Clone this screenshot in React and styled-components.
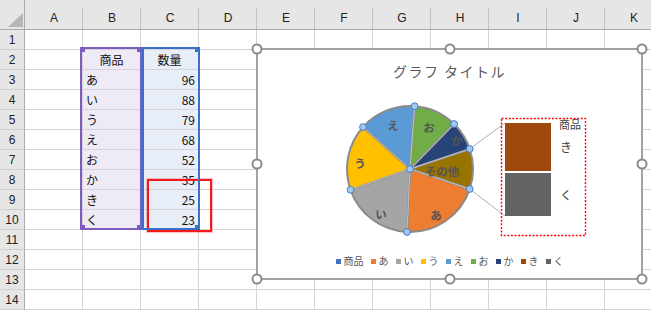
import React from 'react';
import styled, { createGlobalStyle } from 'styled-components';

const COLS = ['A', 'B', 'C', 'D', 'E', 'F', 'G', 'H', 'I', 'J', 'K'];
const ROW_COUNT = 14;

const items = [
  { name: 'あ', qty: 96 },
  { name: 'い', qty: 88 },
  { name: 'う', qty: 79 },
  { name: 'え', qty: 68 },
  { name: 'お', qty: 52 },
  { name: 'か', qty: 35 },
  { name: 'き', qty: 25 },
  { name: 'く', qty: 23 },
];

// pie slices in drawing order, "その他" sits centred on 3 o'clock
const slices = [
  { label: 'その他', value: 48, color: '#997300', at: [442, 171] },
  { label: 'あ', value: 96, color: '#ED7D31', at: [436, 215] },
  { label: 'い', value: 88, color: '#A5A5A5', at: [381, 214] },
  { label: 'う', value: 79, color: '#FFC000', at: [360, 163] },
  { label: 'え', value: 68, color: '#5B9BD5', at: [393, 125] },
  { label: 'お', value: 52, color: '#70AD47', at: [429, 127] },
  { label: 'か', value: 35, color: '#264478', at: [457, 140] },
];

const legend = [
  ['商品', '#4472C4'],
  ['あ', '#ED7D31'],
  ['い', '#A5A5A5'],
  ['う', '#FFC000'],
  ['え', '#5B9BD5'],
  ['お', '#70AD47'],
  ['か', '#264478'],
  ['き', '#9E480E'],
  ['く', '#636363'],
];

const GlobalStyle = createGlobalStyle`
  html, body {
    margin: 0;
    padding: 0;
    background: #ffffff;
    overflow: hidden;
  }
  body {
    font-family: "Noto Sans CJK JP", "Liberation Sans", sans-serif;
  }
`;

const Sheet = styled.div`
  position: relative;
  width: 651px;
  height: 311px;
  overflow: hidden;
  background: #ffffff;
`;

const Grid = styled.div`
  display: grid;
  grid-template-columns: 25px repeat(11, 58px);
  grid-template-rows: 30px repeat(${ROW_COUNT}, 20px);
`;

const Corner = styled.div`
  display: flex;
  justify-content: flex-end;
  align-items: flex-end;
  padding: 0 1px 2px 0;
  background: #e6e6e6;
  border-right: 1px solid #ababab;
  border-bottom: 1px solid #ababab;
  box-sizing: border-box;
`;

const CornerMark = styled.span`
  width: 15px;
  height: 14px;
  background: #b6b6b6;
  clip-path: polygon(100% 0, 100% 100%, 0 100%);
`;

const ColHeader = styled.div`
  position: relative;
  background: #e6e6e6;
  border-bottom: 1px solid #ababab;
  box-sizing: border-box;
  display: flex;
  justify-content: center;
  align-items: center;
  padding-top: 7px;
  font-family: "Liberation Sans", sans-serif;
  font-size: 12px;
  color: #222222;

  &::after {
    content: '';
    position: absolute;
    right: 0;
    top: 8px;
    bottom: 0;
    width: 1px;
    background: #c2c2c2;
  }
`;

const RowHeader = styled.div`
  background: #e6e6e6;
  border-right: 1px solid #ababab;
  border-bottom: 1px solid #cfcfcf;
  box-sizing: border-box;
  display: flex;
  justify-content: center;
  align-items: center;
  font-family: "Liberation Sans", sans-serif;
  font-size: 12px;
  color: #222222;
`;

const Cell = styled.div`
  background: ${(p) => p.$fill || '#ffffff'};
  border-right: 1px solid #d4d4d4;
  border-bottom: 1px solid #d4d4d4;
  box-sizing: border-box;
  display: flex;
  align-items: center;
  justify-content: ${(p) =>
    p.$align === 'right' ? 'flex-end' : p.$align === 'center' ? 'center' : 'flex-start'};
  padding: 0 3px 0 3px;
  font-size: 12px;
  color: #111111;
  white-space: nowrap;
`;

const RangeBox = styled.div`
  position: absolute;
  left: ${(p) => p.$left}px;
  top: 47px;
  width: ${(p) => p.$width}px;
  height: 183px;
  border: 2px solid ${(p) => p.$color};
  box-sizing: border-box;
  display: flex;
  flex-direction: column;
  justify-content: space-between;
  pointer-events: none;
`;

const HandleRow = styled.div`
  display: flex;
  justify-content: ${(p) => (p.$single ? 'flex-end' : 'space-between')};
  margin: -2px -2px;
`;

const RangeHandle = styled.span`
  width: 5px;
  height: 5px;
  background: ${(p) => p.$color};
`;

const MarkBox = styled.div`
  position: absolute;
  left: 147px;
  top: 179px;
  width: 65px;
  height: 53px;
  border: 2px solid #f21a1a;
  box-shadow: 0 0 0 1px rgba(255, 120, 120, 0.45);
  box-sizing: border-box;
`;

const Chart = styled.div`
  position: absolute;
  left: 256px;
  top: 48px;
  width: 387px;
  height: 232px;
  border: 2px solid #a3a3a3;
  box-sizing: border-box;
  background: #ffffff;
  display: flex;
  flex-direction: column;
`;

const ChartTitle = styled.div`
  height: 42px;
  line-height: 42px;
  text-align: center;
  font-size: 14px;
  letter-spacing: 1.5px;
  color: #595959;
`;

const Plot = styled.svg`
  display: block;
  width: 383px;
  height: 160px;
`;

const Legend = styled.div`
  display: flex;
  justify-content: center;
  align-items: center;
  gap: 7px;
  padding-top: 1px;
  height: 16px;
`;

const LegendItem = styled.div`
  display: flex;
  align-items: center;
  font-size: 10px;
  line-height: 16px;
  color: #595959;
`;

const LegendSwatch = styled.span`
  width: 5px;
  height: 5px;
  margin-right: 3px;
  background: ${(p) => p.$color};
`;

const ChartHandle = styled.span`
  position: absolute;
  width: 11px;
  height: 11px;
  border-radius: 50%;
  border: 2px solid #8a8a8a;
  background: #ffffff;
  box-sizing: border-box;
  transform: translate(-50%, -50%);
  left: calc(${(p) => p.$x}% + ${(p) => p.$x / 50 - 1}px);
  top: calc(${(p) => p.$y}% + ${(p) => p.$y / 50 - 1}px);
`;

const CX = 410;
const CY = 169;
const R = 63;

const polar = (deg, r = R) => {
  const a = (deg * Math.PI) / 180;
  return [CX + r * Math.sin(a), CY - r * Math.cos(a)];
};

const total = slices.reduce((s, x) => s + x.value, 0);

const arcs = (() => {
  let angle = 90 - ((slices[0].value / total) * 360) / 2;
  return slices.map((s) => {
    const sweep = (s.value / total) * 360;
    const start = angle;
    angle += sweep;
    return { ...s, start, end: angle, sweep };
  });
})();

const PieOfBar = () => {
  const top = polar(arcs[0].start);
  const bottom = polar(arcs[0].end);
  return (
    <Plot viewBox="258 92 383 160">
      <line x1={top[0]} y1={top[1]} x2={505} y2={123} stroke="#b0b0b0" strokeWidth="1" />
      <line x1={bottom[0]} y1={bottom[1]} x2={505} y2={216} stroke="#b0b0b0" strokeWidth="1" />

      {arcs.map((a) => {
        const [x1, y1] = polar(a.start);
        const [x2, y2] = polar(a.end);
        return (
          <path
            key={a.label}
            d={`M${CX},${CY} L${x1},${y1} A${R},${R} 0 ${a.sweep > 180 ? 1 : 0} 1 ${x2},${y2} Z`}
            fill={a.color}
            stroke="#8a8a8a"
            strokeWidth="2"
            strokeLinejoin="round"
          />
        );
      })}
      {arcs.map((a) => {
        const [x, y] = polar(a.start, R - 1);
        return <line key={a.label} x1={CX} y1={CY} x2={x} y2={y} stroke="#dcdcdc" strokeWidth="0.7" />;
      })}

      {arcs.map((a) => (
        <text
          key={a.label}
          x={a.at[0]}
          y={a.at[1]}
          textAnchor="middle"
          dominantBaseline="central"
          fontSize="11.5"
          fontWeight="700"
          fill="#555555"
        >
          {a.label}
        </text>
      ))}

      <rect x="505" y="123" width="46" height="48" fill="#9E480E" />
      <rect x="505" y="173" width="46" height="43" fill="#636363" />
      <text x="559" y="124" fontSize="11" fill="#404040" dominantBaseline="central">商品</text>
      <text x="560" y="146" fontSize="12" fill="#404040" dominantBaseline="central">き</text>
      <text x="560" y="194" fontSize="12" fill="#404040" dominantBaseline="central">く</text>
      <rect
        x="501.5"
        y="118.5"
        width="84"
        height="117"
        fill="none"
        stroke="#ff0000"
        strokeWidth="1.4"
        strokeDasharray="2 1.6"
      />

      {[[CX, CY], ...arcs.map((a) => polar(a.start))].map(([x, y], i) => (
        <circle key={i} cx={x} cy={y} r="3.4" fill="#a3c8ef" stroke="#3f7fc6" strokeWidth="1" />
      ))}
    </Plot>
  );
};

const cellValue = (col, row) => {
  if (row === 2 && col === 'B') return { text: '商品', align: 'center' };
  if (row === 2 && col === 'C') return { text: '数量', align: 'center' };
  const item = items[row - 3];
  if (item && col === 'B') return { text: item.name, align: 'left' };
  if (item && col === 'C') return { text: item.qty, align: 'right' };
  return null;
};

const cellFill = (col, row) => {
  if (row < 2 || row > 10) return null;
  if (col === 'B') return '#efebf6';
  if (col === 'C') return '#e8eef7';
  return null;
};

const Range = ({ left, width, color, single }) => (
  <RangeBox $left={left} $width={width} $color={color}>
    {[0, 1].map((i) => (
      <HandleRow key={i} $single={single}>
        {!single && <RangeHandle $color={color} />}
        <RangeHandle $color={color} />
      </HandleRow>
    ))}
  </RangeBox>
);

const App = () => {
  const rows = Array.from({ length: ROW_COUNT }, (_, i) => i + 1);
  return (
    <Sheet>
      <GlobalStyle />
      <Grid>
        <Corner>
          <CornerMark />
        </Corner>
        {COLS.map((c) => (
          <ColHeader key={c}>{c}</ColHeader>
        ))}
        {rows.map((r) => (
          <React.Fragment key={r}>
            <RowHeader>{r}</RowHeader>
            {COLS.map((c) => {
              const v = cellValue(c, r);
              return (
                <Cell key={c + r} $fill={cellFill(c, r)} $align={v && v.align}>
                  {v ? v.text : ''}
                </Cell>
              );
            })}
          </React.Fragment>
        ))}
      </Grid>

      <MarkBox />
      <Range left={80} width={62} color="#7e5bbf" />
      <Range left={142} width={58} color="#3a70c8" single />

      <Chart>
        <ChartTitle>グラフ タイトル</ChartTitle>
        <PieOfBar />
        <Legend>
          {legend.map(([name, color]) => (
            <LegendItem key={name}>
              <LegendSwatch $color={color} />
              {name}
            </LegendItem>
          ))}
        </Legend>
        {[
          [0, 0], [50, 0], [100, 0],
          [0, 50], [100, 50],
          [0, 100], [50, 100], [100, 100],
        ].map(([x, y]) => (
          <ChartHandle key={`${x}-${y}`} $x={x} $y={y} />
        ))}
      </Chart>
    </Sheet>
  );
};

export default App;
